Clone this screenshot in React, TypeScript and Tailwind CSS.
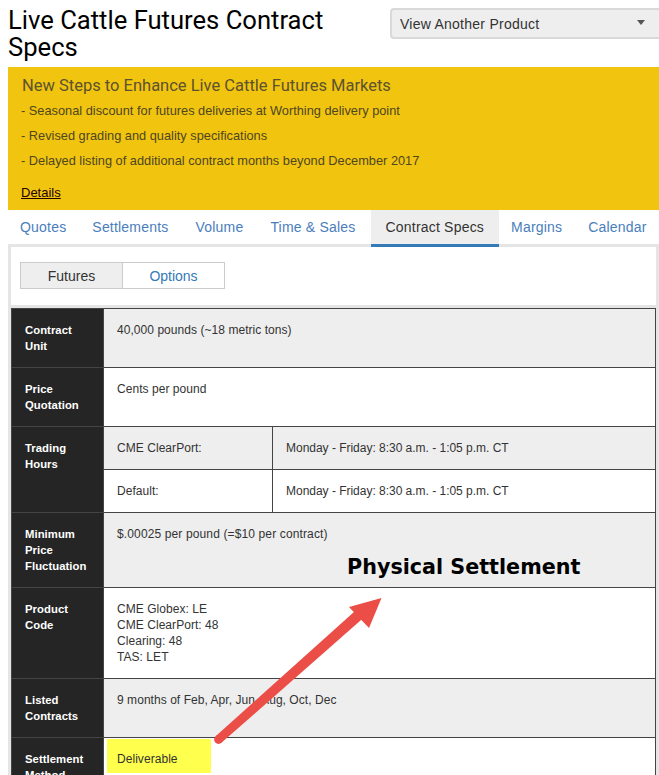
export default function App() {
  const Head = ({ children }: { children: React.ReactNode }) => (
    <div className="w-[91px] shrink-0 bg-[#252525] pt-[13px] pl-[13px] text-[11.3px] leading-[16px] font-bold text-white">{children}</div>
  );
  return (
    <div className="relative w-[659px] h-[775px] overflow-hidden bg-white font-['Liberation_Sans',Arial,sans-serif]">
      <div className="flex h-[67px] pl-2">
        <h1 className="w-[382px] pt-[7px] font-['Roboto',sans-serif] text-[25.6px] leading-[27px] font-normal text-black">Live Cattle Futures Contract Specs</h1>
        <div className="mt-2 flex h-[31px] flex-1 items-center justify-between rounded-l-[4px] border-2 border-r-0 border-[#d9d9d9] bg-[#eeeeee] pr-[14px] pl-2 text-[14px] tracking-[0.25px] text-[#333]">
          <span className="pt-[1px]">View Another Product</span>
          <span className="mb-[2px] h-0 w-0 border-x-[4px] border-t-[5px] border-x-transparent border-t-[#555]"></span>
        </div>
      </div>
      <div className="ml-2 h-[143px] bg-[#f1c40f] pt-[8px] pl-[13px] text-[12.8px] text-[#4f4620]">
        <div className="ml-px font-['Roboto',sans-serif] text-[16.5px] leading-[22px] text-[#5c5230]">New Steps to Enhance Live Cattle Futures Markets</div>
        <p className="mt-[1px] leading-[25px]">- Seasonal discount for futures deliveries at Worthing delivery point</p>
        <p className="leading-[25px]">- Revised grading and quality specifications</p>
        <p className="leading-[25px]">- Delayed listing of additional contract months beyond December 2017</p>
        <a className="mt-[8px] block text-[13px] leading-[24px] text-[#200] underline">Details</a>
      </div>
      <div className="ml-2 flex h-[37px] border-b-[3px] border-[#e5e5e5] text-[14px] tracking-[0.2px] whitespace-nowrap text-[#4a7ebb]">
        <div className="flex shrink-0 items-center pr-[13px] pl-3">Quotes</div>
        <div className="flex shrink-0 items-center pr-[14px] pl-[13px]">Settlements</div>
        <div className="flex shrink-0 items-center pr-[14px] pl-[13px]">Volume</div>
        <div className="flex shrink-0 items-center pr-[15px] pl-[13px]">Time &amp; Sales</div>
        <div className="-mb-[3px] flex shrink-0 items-center border-b-[3px] border-[#337ab7] bg-[#eeeeee] px-[15px] text-[#333]">Contract Specs</div>
        <div className="flex shrink-0 items-center pr-[13px] pl-3">Margins</div>
        <div className="flex shrink-0 items-center px-[13px]">Calendar</div>
      </div>
      <div className="ml-2 border-x-[3px] border-[#e5e5e5]">
        <div className="flex h-[61px] items-start border-b-[3px] border-[#e5e5e5] pt-[15px] pl-[9px] text-[14px]">
          <div className="flex h-[27px] w-[103px] items-center justify-center border border-[#cccccc] bg-[#eeeeee] pt-px text-[#333]">Futures</div>
          <div className="-ml-px flex h-[27px] w-[103px] items-center justify-center border border-[#cccccc] pt-px text-[#337ab7]">Options</div>
        </div>
        <div className="border border-[#444] text-[12px] leading-[16px] tracking-[0.05px] text-[#333]">
          <div className="flex h-[59px] border-b border-[#444]">
            <Head>Contract<br />Unit</Head>
            <div className="flex-1 border-l border-[#444] bg-[#eeeeee] pt-[13px] pl-[13px]">40,000 pounds (~18 metric tons)</div>
          </div>
          <div className="flex h-[59px] border-b border-[#444]">
            <Head>Price<br />Quotation</Head>
            <div className="flex-1 border-l border-[#444] pt-[13px] pl-[13px]">Cents per pound</div>
          </div>
          <div className="flex h-[86px] border-b border-[#444]">
            <Head>Trading<br />Hours</Head>
            <div className="flex flex-1 flex-col border-l border-[#444]">
              <div className="flex h-[43px] border-b border-[#444] bg-[#eeeeee]">
                <div className="w-[168px] pt-[13px] pl-[13px]">CME ClearPort:</div>
                <div className="flex-1 border-l border-[#444] pt-[13px] pl-[13px] tracking-[-0.02px]">Monday - Friday: 8:30 a.m. - 1:05 p.m. CT</div>
              </div>
              <div className="flex flex-1">
                <div className="w-[168px] pt-[13px] pl-[13px]">Default:</div>
                <div className="flex-1 border-l border-[#444] pt-[13px] pl-[13px] tracking-[-0.02px]">Monday - Friday: 8:30 a.m. - 1:05 p.m. CT</div>
              </div>
            </div>
          </div>
          <div className="flex h-[75px] border-b border-[#444]">
            <Head>Minimum<br />Price<br />Fluctuation</Head>
            <div className="flex-1 border-l border-[#444] bg-[#eeeeee] pt-[13px] pl-[13px] tracking-[0.13px]">$.00025 per pound (=$10 per contract)</div>
          </div>
          <div className="flex h-[91px] border-b border-[#444]">
            <Head>Product<br />Code</Head>
            <div className="flex-1 border-l border-[#444] pt-[13px] pl-[13px]">CME Globex: LE<br />CME ClearPort: 48<br />Clearing: 48<br />TAS: LET</div>
          </div>
          <div className="flex h-[59px] border-b border-[#444]">
            <Head>Listed<br />Contracts</Head>
            <div className="flex-1 border-l border-[#444] bg-[#eeeeee] pt-[13px] pl-[13px]">9 months of Feb, Apr, Jun, Aug, Oct, Dec</div>
          </div>
          <div className="flex h-[59px]">
            <Head>Settlement<br />Method</Head>
            <div className="flex-1 border-l border-[#444] pt-[1px] pl-[3px]">
              <div className="h-[34px] w-[104px] bg-[#ffff4d] pt-[12px] pl-[10px]">Deliverable</div>
            </div>
          </div>
        </div>
      </div>
      <div className="absolute top-[553px] left-[347px] font-['DejaVu_Sans',sans-serif] text-[20.7px] leading-[28px] font-bold text-black">Physical Settlement</div>
      <svg className="absolute top-0 left-0" width="659" height="775" viewBox="0 0 659 775" fill="none">
        <circle cx="218.5" cy="739.5" r="4.4" fill="#eb4d47" />
        <path d="M215.6 736.2 L358.4 607.9 L365.6 616.1 L221.4 742.8 Z" fill="#eb4d47" />
        <path d="M381.5 598 L349 607 L369 628 Z" fill="#eb4d47" />
      </svg>
    </div>
  );
}
